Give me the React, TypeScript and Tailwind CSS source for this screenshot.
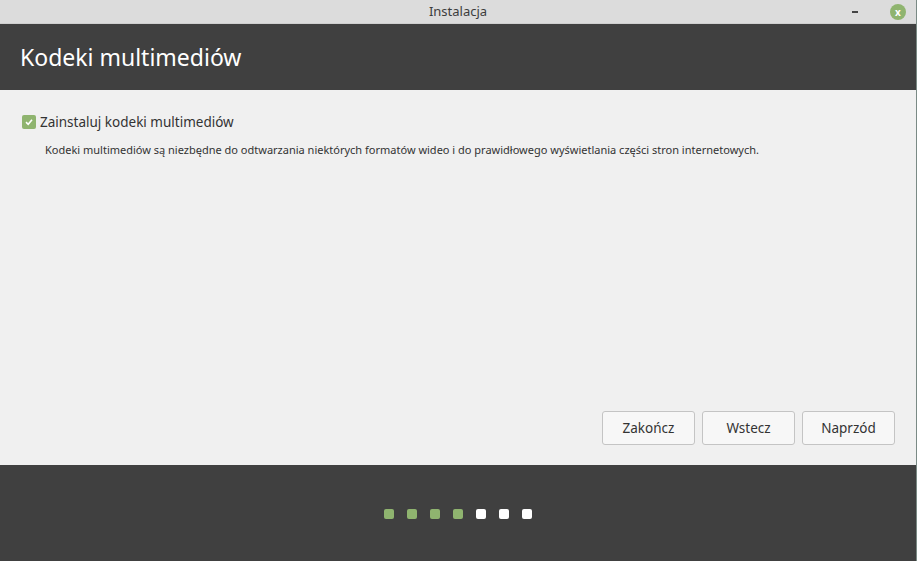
export default function App() {
  const dots = ["g", "g", "g", "g", "w", "w", "w"];
  return (
    <div className="w-[917px] h-[561px] flex flex-col bg-[#f0f0f0] border-r border-[#7a8a85] overflow-hidden" style={{ fontFamily: '"Noto Sans", "Open Sans", sans-serif' }}>
      <div className="h-[24px] shrink-0 bg-[#dcdcdc] relative flex items-center justify-center border-b border-[#cfcfcf]">
        <span className="text-[13px] text-[#3c3c3c]">Instalacja</span>
        <span className="absolute left-[852px] top-[11px] w-[6px] h-[2px] bg-[#444]" />
        <span className="absolute left-[890px] top-[4px] w-[16px] h-[16px] rounded-full bg-[#8fb46f] flex items-center justify-center text-white text-[10px] font-bold leading-none">x</span>
      </div>
      <div className="h-[66px] shrink-0 bg-[#404040] flex items-center px-[20px]">
        <span className="text-white text-[23px]">Kodeki multimediów</span>
      </div>
      <div className="flex-1 flex flex-col px-[22px] pt-[22px]">
        <div className="flex items-center gap-[4px]">
          <span className="w-[14px] h-[14px] rounded-[2px] bg-[#8fb46f] flex items-center justify-center">
            <svg width="10" height="10" viewBox="0 0 10 10"><path d="M2 5.2 L4.2 7.3 L8 2.8" stroke="white" strokeWidth="1.6" fill="none" /></svg>
          </span>
          <span className="text-[13.5px] text-[#333]">Zainstaluj kodeki multimediów</span>
        </div>
        <div className="mt-[10px] pl-[23px] text-[11px] text-[#333]">Kodeki multimediów są niezbędne do odtwarzania niektórych formatów wideo i do prawidłowego wyświetlania części stron internetowych.</div>
        <div className="mt-auto mb-[20px] flex justify-end gap-[7px] pr-[-1px] mr-[-1px]">
          {["Zakończ", "Wstecz", "Naprzód"].map((t) => (
            <button key={t} className="w-[93px] h-[34px] rounded-[3px] border border-[#c4c4c4] bg-[#f7f7f7] text-[13.5px] text-[#333]">{t}</button>
          ))}
        </div>
      </div>
      <div className="h-[96px] shrink-0 bg-[#404040] flex items-center justify-center gap-[13px] pt-[2px]">
        {dots.map((d, i) => (
          <span key={i} className={d === "g" ? "w-[10px] h-[10px] rounded-[2px] bg-[#8fb46f]" : "w-[10px] h-[10px] rounded-[2px] bg-white"} />
        ))}
      </div>
    </div>
  );
}
